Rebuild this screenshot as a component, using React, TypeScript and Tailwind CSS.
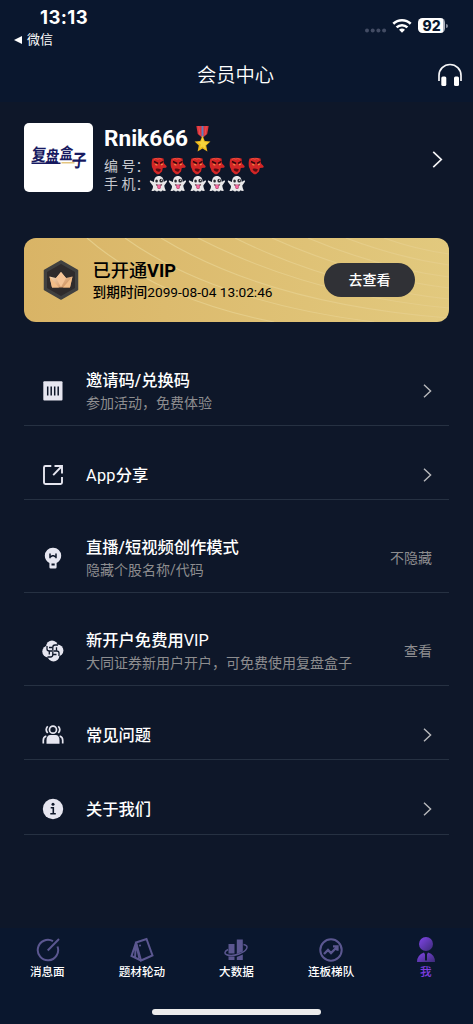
import type { ReactNode } from "react";

const CJK = "font-[Roboto,'Noto_Sans_CJK_SC',sans-serif]";

function Medal() {
  return (
    <svg width="17" height="26" viewBox="0 0 18 26" preserveAspectRatio="none" aria-hidden="true">
      <path d="M2.500 0h13l-1.500 8-5 4-5-4z" fill="#e0353b" />
      <path d="M8 0h2v10.500L9 12l-1-1.500z" fill="#5b7fc0" />
      <path d="M5 0l1.300 9M13 0l-1.300 9" stroke="#ee6468" strokeWidth=".6" />
      <path d="M9 9.500l2.400 5.500 6 .6-4.500 4 1.300 5.900L9 22.400l-5.200 3.100 1.300-5.900-4.500-4 6-.6z" fill="#edb81c" />
      <path d="M9 11l1.600 5 5 .4-4 2.800 1 4L9 20.500 6.300 22l1-3.500L3.500 16l4-.2z" fill="#f8d43c" />
    </svg>
  );
}

function Goblin() {
  return (
    <svg width="19.500" height="18" viewBox="0 0 19.500 18" aria-hidden="true">
      <path d="M3.500 1.500c4-1 8-.9 11 0l.6 5 2.400 2.500c.5 1-.2 1.800-1.400 1.800l-2.300.2-.8 3.600-3 2.700H8L4.800 14.500 3.500 11c-1-1-1.200-6.500 0-9.500z" fill="#d32626" />
      <path d="M4.800 2.500l2-1 2 .7 2-.7 2 .8" stroke="#f0523f" fill="none" />
      <path d="M5 4.500l4.200 2M14.500 4.300l-3.500 2" stroke="#35090c" strokeWidth="1.400" />
      <path d="M6.300 7.600l2 .4M12 7.900l1.800-.7" stroke="#f3bd52" strokeWidth=".9" />
      <path d="M6.500 12c2-.8 3.800-.5 5.500.5l-1.300 2c-1.500.5-3.200 0-4.200-2.500z" fill="#5a0d12" />
    </svg>
  );
}

function Ghost() {
  return (
    <svg width="19.500" height="18" viewBox="0 0 19.500 18" aria-hidden="true">
      <path d="M5 7C5 3 7 1 10 1s4.700 2.200 4.700 6l2.300-1.500c1-.3 1.400.5.8 1.500l-2.500 3.500c.2 2.200.7 3.800 1.700 5-1.500.8-2.600.4-3.400-.2-1 1.600-2.700 1.500-3.700.2-1.500 1.500-3.300 1-3.900-.2-1.300 1-2.600.8-3.600.1C3.600 14.500 4 13 4 11L1 7c-.5-1.200.2-2 1-1.200z" fill="#e9e8e9" />
      <ellipse cx="7.600" cy="6" rx="1.300" ry="1.600" fill="#292a30" />
      <ellipse cx="12.200" cy="5.700" rx="1.800" ry="1.900" fill="#292a30" />
      <circle cx="12.500" cy="5.200" r=".6" fill="#fff" />
      <path d="M6.800 9c2 .9 4.300.9 6.400 0-.4 1.500-1 2.100-1.500 2.300v1.500c-.5 1.600-2.700 1.600-3.300 0v-1.500C7.500 11 7 10.200 6.800 9z" fill="#6b3a48" />
      <path d="M8.400 10.200c.9-.5 2.100-.5 3.200 0v2.500c-.5 1.400-2.600 1.400-3.200 0z" fill="#f3689f" />
    </svg>
  );
}

function BrandMark() {
  return (
    <svg width="69" height="69" viewBox="0 0 69 69" className="shrink-0 rounded-[5px] bg-white">
      <g fill="#17195f" fontFamily="'Noto Sans CJK SC', sans-serif" fontWeight="700" transform="translate(3.500 0) skewX(-6) scale(.83 1)">
        <text x="9" y="38.500" fontSize="17.500">复</text>
        <text x="26.500" y="39.500" fontSize="16">盘</text>
        <text x="43" y="36.500" fontSize="16">盒</text>
        <text x="58" y="44.500" fontSize="18">子</text>
      </g>
      <path d="M7.500 40.300h29" stroke="#17195f" strokeWidth="1.400" />
      <path d="M37.500 39.700h13" stroke="#e4c580" strokeWidth="1.500" />
    </svg>
  );
}

function Chevron({ big = false }: { big?: boolean }) {
  return (
    <svg width={big ? 11 : 9} height={big ? 17 : 14} viewBox="0 0 9 14" fill="none" stroke={big ? "#f4f4f6" : "#b8b9bc"} strokeWidth={big ? 1.4 : 1.4} aria-hidden="true">
      <path d="M1 .8l6.600 6.200L1 13.200" />
    </svg>
  );
}

const ink = "#e6e6f0";
const hole = "#0e1729";

const voucher = (
  <svg width="22" height="22" viewBox="0 0 22 22">
    <rect x="1.300" y="1.300" width="19.200" height="19.200" rx="1" fill={ink} />
    <path d="M5.700 6.500v9M9.200 6.500v9M12.700 6.500v9M16.200 6.500v9" stroke={hole} strokeWidth="1.500" />
  </svg>
);
const share = (
  <svg width="22" height="22" viewBox="0 0 22 22" fill="none" stroke={ink} strokeWidth="1.900">
    <path d="M9.300 2H3.400Q2 2 2 3.400v15.200Q2 20 3.400 20h15.200q1.400 0 1.400-1.400v-5.600M12.500 2H20v7.600M19.500 2.500l-8.300 8.700" />
  </svg>
);
const bulb = (
  <svg width="22" height="22" viewBox="0 0 22 22">
    <path d="M11 .7a8 8 0 0 0-8.200 8c0 3.200 1.900 5.800 4.600 7.200v4.300q0 1.300 1.300 1.300h4.600q1.300 0 1.300-1.300v-4.300c2.700-1.400 4.600-4 4.600-7.200A8 8 0 0 0 11 .7z" fill={ink} />
    <path d="M8 6.500v4.700M14 6.500v4.700M8 10.200l2.300-1.400h1.400L14 10.200" fill="none" stroke={hole} strokeWidth="1.500" />
    <path d="M9.500 16.500h3.200v2H9.500z" fill={hole} />
  </svg>
);
const knot = (
  <svg width="22" height="22" viewBox="0 0 22 22">
    <g fill={ink}>
      <circle cx="10" cy="6.300" r="5.900" /><circle cx="15.500" cy="10.500" r="5.900" />
      <circle cx="11.500" cy="15.700" r="5.900" /><circle cx="6.200" cy="11.500" r="5.900" />
    </g>
    <g fill="none" stroke={hole} strokeWidth="1.300">
      <path d="M16 5h-3q-2.200 0-2.200 2.500v3M17 16v-3q0-2-2.500-2h-3M5.500 17h3q2.300 0 2.300-2.500v-3M5 6v3q0 2 2.500 2h3" />
      <path d="M7 7.500h3.500M14.500 7.300v3.500M14.500 14.500H11M7.300 14.500V11" />
    </g>
  </svg>
);
const people = (
  <svg width="22" height="22" viewBox="0 0 22 22" fill="none" stroke={ink} strokeWidth="1.700">
    <circle cx="11" cy="5.700" r="3.500" />
    <path d="M5.700 2.300Q2.700 5.700 5.700 9M16.300 2.300q3 3.400 0 6.700M1.300 19.500v-3.200q0-3.500 3-4.200M20.700 19.500v-3.200q0-3.500-3-4.200" />
    <path d="M4.500 19.800v-3.300q0-5.500 4-5.500h5q4 0 4 5.500v3.300z" fill={ink} stroke="none" />
  </svg>
);
const info = (
  <svg width="22" height="22" viewBox="0 0 22 22">
    <circle cx="11" cy="11" r="10.200" fill={ink} />
    <circle cx="11" cy="6.300" r="1.500" fill={hole} />
    <path d="M8.700 9.700h2.600v5.800M8.300 15.800h5.500" fill="none" stroke={hole} strokeWidth="1.600" />
  </svg>
);

type RowProps = { icon: ReactNode; title: ReactNode; note?: string; action?: string };

function Row({ icon, title, note, action }: RowProps) {
  return (
    <div className={`flex items-center border-b border-[#263142] pt-6 pr-[17px] pl-[18px] ${note ? "h-[93px]" : "h-[74.2px]"}`}>
      <span className="shrink-0">{icon}</span>
      <div className="ml-[22px] flex-1 whitespace-nowrap">
        <div className="pt-[2px] text-[16.3px] leading-[22px] font-medium text-white">{title}</div>
        {note && <div className="text-[14px] leading-[22px] text-[#8d8d8f]">{note}</div>}
      </div>
      {action ? <span className="text-[14px] text-[#8d8d8f]">{action}</span> : <Chevron />}
    </div>
  );
}

const rows: RowProps[] = [
  { icon: voucher, title: "邀请码/兑换码", note: "参加活动，免费体验" },
  { icon: share, title: <><span className="font-normal tracking-[0.3px]">App</span>分享</> },
  { icon: bulb, title: "直播/短视频创作模式", note: "隐藏个股名称/代码", action: "不隐藏" },
  { icon: knot, title: <>新开户免费用<span className="font-normal">VIP</span></>, note: "大同证券新用户开户，可免费使用复盘盒子", action: "查看" },
  { icon: people, title: "常见问题" },
  { icon: info, title: "关于我们" },
];

const tabs: { label: string; icon: ReactNode }[] = [
  {
    label: "消息面",
    icon: <g><path d="M19 4.200A10.200 10.200 0 1 0 23.500 9.500" /><path d="M13.700 13.500L25 2" /></g>,
  },
  {
    label: "题材轮动",
    icon: <g><path d="M7 5.500L17.500 2l6 16.500-11.500 5z" /><path d="M7 5.500L2.500 19l9.500 4.500M7 6L6 21M7 6l3.300 15" /><circle cx="11" cy="8.500" r="1" fill="#5b5790" stroke="none" /></g>,
  },
  {
    label: "大数据",
    icon: <g><g fill="#5b5790" stroke="none"><path d="M5.500 7h6v9.500h-6zM13.800 2.500h6v12l-6 2.500zM5.500 19.500h6V23h-6zM13.800 20l6-2.500V23h-6z" /></g><path d="M5 12.500c-8 4.500 1 8 11 4.500 8-3 11-8.500 4.500-9.500" strokeWidth="1.500" /></g>,
  },
  {
    label: "连板梯队",
    icon: <g><circle cx="13" cy="13" r="10.700" /><path d="M6 17l4-4 3 3 6-6M15 9.300h4.500v4.500" strokeWidth="2.300" /></g>,
  },
  { label: "我", icon: null },
];

export default function App() {
  return (
    <div className={`flex h-[1024px] w-[473px] flex-col overflow-hidden bg-[#0e1729] text-white ${CJK}`}>
      <header className="flex h-[102px] shrink-0 flex-col bg-[#0a172e]">
        <div className="flex h-[50px] justify-between pr-[25px] pl-[14px]">
          <div className="pt-[7px]">
            <div className="pl-[26px] font-[Inter,sans-serif] text-[18.500px] leading-[21px] font-bold tracking-[0.4px]">13:13</div>
            <div className="flex items-center gap-[5px] pt-px text-[13px] leading-[22px]">
              <svg width="8" height="8" viewBox="0 0 8 8"><path d="M0 4l8-4v8z" fill="#fff" /></svg>
              <span>微信</span>
            </div>
          </div>
          <div className="flex items-start pt-[18px]">
            <svg width="24" height="16" viewBox="0 0 24 16" fill="#434c64">
              <circle cx="4" cy="12.500" r="2" /><circle cx="9.700" cy="12.500" r="2" /><circle cx="15.400" cy="12.500" r="2" /><circle cx="21.100" cy="12.500" r="2" />
            </svg>
            <svg width="20" height="16" viewBox="0 0 20 16" className="ml-[5px]" fill="none" stroke="#fff" strokeWidth="2.600">
              <path d="M1.300 5.800a12.600 12.600 0 0 1 17.400 0M4.600 9.400a7.700 7.700 0 0 1 10.800 0" />
              <path d="M7 11.800a4.500 4.500 0 0 1 6 0l-3 3z" fill="#fff" stroke="none" />
            </svg>
            <div className="ml-[6px] flex h-[15px] w-[27px] items-center justify-center rounded-[4.500px] bg-linear-to-r from-white from-92% to-[#adb2bd] to-92% font-[Inter,sans-serif] text-[14px] font-extrabold text-[#0a172e]">92</div>
            <span className="mt-[6px] ml-px h-[4px] w-[2px] rounded-r bg-[#858c9b]" />
          </div>
        </div>
        <div className="flex h-[52px] items-center justify-between pr-[10px] pl-[34px]">
          <h1 className="flex-1 text-center text-[19.300px] font-[350]">会员中心</h1>
          <svg width="26" height="24" viewBox="0 0 26 24" fill="none" className="mb-[2px]">
            <path d="M2 18V12.500a11 11 0 0 1 22 0V18" stroke="#f5f5f7" strokeWidth="1.700" />
            <rect x="4.300" y="13.500" width="5" height="9.500" rx="1.500" fill="#fff" />
            <rect x="17" y="13.500" width="5" height="9.500" rx="1.500" fill="#fff" />
          </svg>
        </div>
      </header>

      <main className="flex-1 px-6">
        <section className="mt-[21px] flex h-[69px] items-center">
          <BrandMark />
          <div className="ml-[11px] flex-1 pt-[2px]">
            <div className="flex h-[28px] items-center gap-[6px]">
              <span className="text-[22.600px] leading-[28px] font-bold">Rnik666</span>
              <Medal />
            </div>
            <div className="mt-[4px] flex h-[19px] items-center text-[14px] text-[#c6c8ce]">
              <span className="w-[44.500px] whitespace-pre">编 号：</span>
              {[0, 1, 2, 3, 4, 5].map((n) => <Goblin key={n} />)}
            </div>
            <div className="flex h-[17px] items-center text-[14px] text-[#c6c8ce]">
              <span className="w-[44.500px] whitespace-pre">手 机：</span>
              {[0, 1, 2, 3, 4].map((n) => <Ghost key={n} />)}
            </div>
          </div>
          <span className="mt-[3px] mr-[6px]"><Chevron big /></span>
        </section>

        <section className="relative mt-[46px] flex h-[84px] items-center overflow-hidden rounded-[12px] bg-linear-to-r from-[#d9b466] to-[#e2c97e] pr-[34px] pl-[18px] text-black">
          <svg className="absolute inset-0" width="425" height="84" viewBox="0 0 425 84" fill="none" stroke="#e5cd89" strokeWidth="1.100" aria-hidden="true">
            <path d="M63 0Q135 62 250 84M101 0Q190 64 350 84M137 0Q245 66 425 80M174 0Q285 57 425 70M211 0Q310 49 425 61M248 0Q335 39 425 50M284 0Q355 30 425 39M322 0Q375 20 425 27M360 0Q390 11 425 16" />
          </svg>
          <svg className="relative shrink-0" width="38" height="40" viewBox="0 0 38 40">
            <defs><linearGradient id="crown" x1="0" y1="0" x2="1" y2="1"><stop stopColor="#ffe9ca" /><stop offset="1" stopColor="#c8834d" /></linearGradient></defs>
            <path d="M19 1l16.500 9.500v19L19 39 2.500 29.500v-19z" fill="#414141" stroke="#414141" strokeWidth="1.500" strokeLinejoin="round" />
            <path d="M19 4l14 8v16l-14 8-14-8V12z" fill="#2f2b2c" />
            <path d="M7.500 16.500l6.500 1.500 5-6 5 6 6.500-1.500-2.500 11H10z" fill="url(#crown)" />
            <path d="M14 18l5 9 5-9-5-6z" fill="#f5c497" />
            <path d="M7.500 16.500l9.500 11h-7zM30.500 16.500l-9.500 11h7z" fill="#f2bd88" />
          </svg>
          <div className="relative ml-[12.500px] flex-1 whitespace-nowrap">
            <div className="pt-px text-[18.200px] leading-6 font-medium"><span>已开通</span><span className="font-bold">VIP</span></div>
            <div className="text-[13.700px] leading-[19px]"><span className="font-medium">到期时间</span>2099-08-04 13:02:46</div>
          </div>
          <button className="relative h-[34px] w-[91px] rounded-full bg-[#303136] text-[14px] font-medium text-white">去查看</button>
        </section>

        <section className="mt-[11px]">
          {rows.map((row, i) => <Row key={i} {...row} />)}
        </section>
      </main>

      <nav className="flex h-[96px] shrink-0 flex-col items-center bg-[#0a172e]">
        <div className="grid h-[81px] w-full grid-cols-5 pt-[8.500px]">
          {tabs.map(({ label, icon }) => (
            <div key={label} className={`flex flex-col items-center gap-[0.5px] text-[11.600px] leading-[18px] font-medium ${icon ? "text-white" : "text-[#7e3ee0]"}`}>
              {icon ? (
                <svg width="26" height="26" viewBox="0 0 26 26" fill="none" stroke="#5b5790" strokeWidth="2">{icon}</svg>
              ) : (
                <svg width="26" height="26" viewBox="0 0 26 26">
                  <defs><linearGradient id="me" x1="0" y1="0" x2="1" y2="1"><stop stopColor="#8145e8" /><stop offset="1" stopColor="#3c2b78" /></linearGradient></defs>
                  <circle cx="13" cy="7" r="7" fill="url(#me)" />
                  <path d="M4 25q0-7 7-9.500l1 2v6h2v-6l1-2q7 2 7 9.500z" fill="url(#me)" />
                </svg>
              )}
              <span>{label}</span>
            </div>
          ))}
        </div>
        <div className="h-[6px] w-[169px] rounded-full bg-[#ececec]" />
      </nav>
    </div>
  );
}
